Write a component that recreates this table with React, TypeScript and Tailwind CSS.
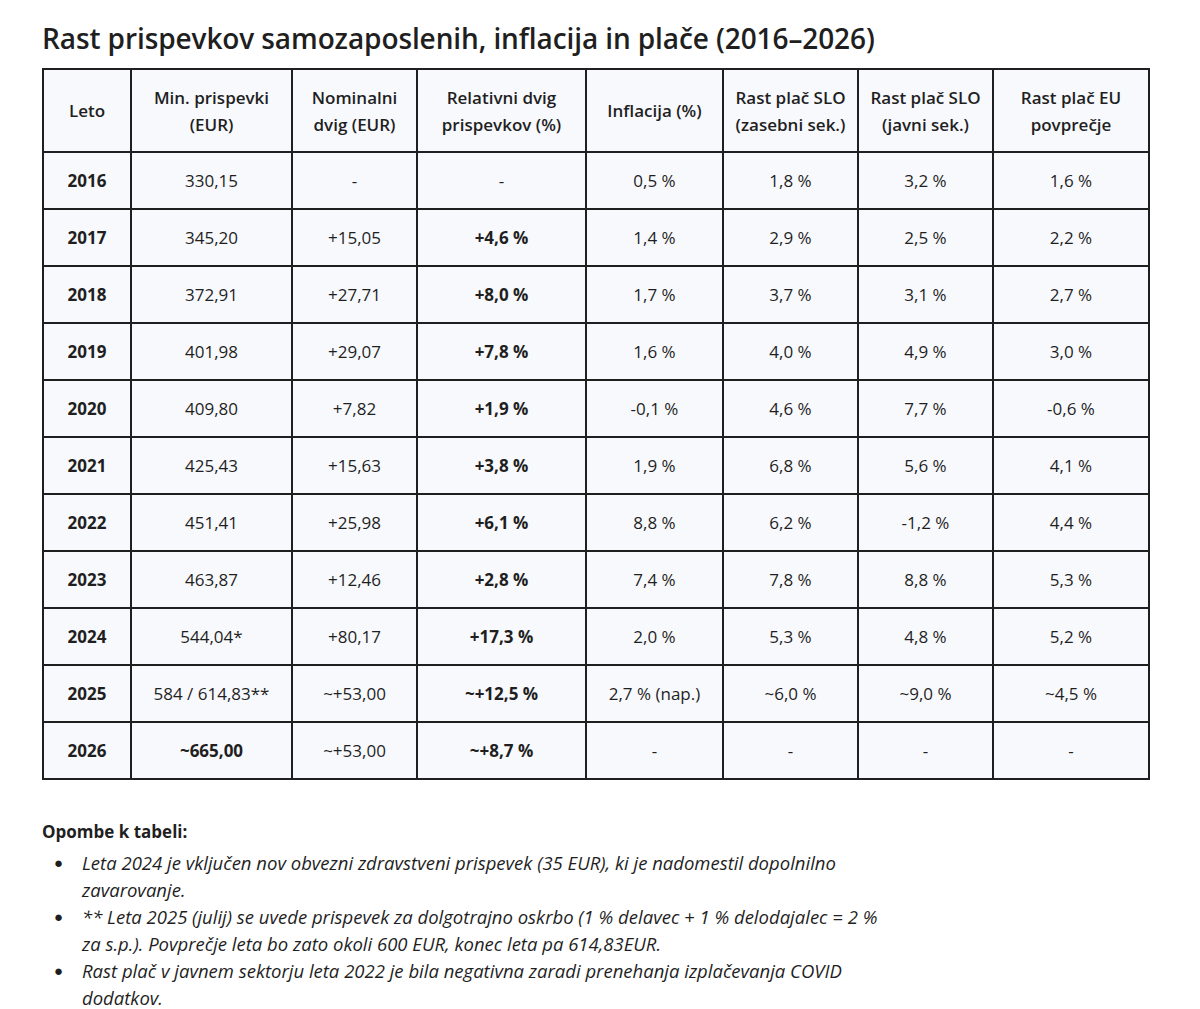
const headerLines: string[][] = [
  ["Leto"],
  ["Min. prispevki", "(EUR)"],
  ["Nominalni", "dvig (EUR)"],
  ["Relativni dvig", "prispevkov (%)"],
  ["Inflacija (%)"],
  ["Rast plač SLO", "(zasebni sek.)"],
  ["Rast plač SLO", "(javni sek.)"],
  ["Rast plač EU", "povprečje"],
];

const colWidths = [88, 161, 125, 169, 137, 135, 135, 156];

type Row = { year: string; min: string; minBold?: boolean; nom: string; rel: string; inf: string; zas: string; jav: string; eu: string };

const rows: Row[] = [
  { year: "2016", min: "330,15", nom: "-", rel: "-", inf: "0,5 %", zas: "1,8 %", jav: "3,2 %", eu: "1,6 %" },
  { year: "2017", min: "345,20", nom: "+15,05", rel: "+4,6 %", inf: "1,4 %", zas: "2,9 %", jav: "2,5 %", eu: "2,2 %" },
  { year: "2018", min: "372,91", nom: "+27,71", rel: "+8,0 %", inf: "1,7 %", zas: "3,7 %", jav: "3,1 %", eu: "2,7 %" },
  { year: "2019", min: "401,98", nom: "+29,07", rel: "+7,8 %", inf: "1,6 %", zas: "4,0 %", jav: "4,9 %", eu: "3,0 %" },
  { year: "2020", min: "409,80", nom: "+7,82", rel: "+1,9 %", inf: "-0,1 %", zas: "4,6 %", jav: "7,7 %", eu: "-0,6 %" },
  { year: "2021", min: "425,43", nom: "+15,63", rel: "+3,8 %", inf: "1,9 %", zas: "6,8 %", jav: "5,6 %", eu: "4,1 %" },
  { year: "2022", min: "451,41", nom: "+25,98", rel: "+6,1 %", inf: "8,8 %", zas: "6,2 %", jav: "-1,2 %", eu: "4,4 %" },
  { year: "2023", min: "463,87", nom: "+12,46", rel: "+2,8 %", inf: "7,4 %", zas: "7,8 %", jav: "8,8 %", eu: "5,3 %" },
  { year: "2024", min: "544,04*", nom: "+80,17", rel: "+17,3 %", inf: "2,0 %", zas: "5,3 %", jav: "4,8 %", eu: "5,2 %" },
  { year: "2025", min: "584 / 614,83**", nom: "~+53,00", rel: "~+12,5 %", inf: "2,7 % (nap.)", zas: "~6,0 %", jav: "~9,0 %", eu: "~4,5 %" },
  { year: "2026", min: "~665,00", minBold: true, nom: "~+53,00", rel: "~+8,7 %", inf: "-", zas: "-", jav: "-", eu: "-" },
];

const notes = [
  "Leta 2024 je vključen nov obvezni zdravstveni prispevek (35 EUR), ki je nadomestil dopolnilno zavarovanje.",
  "** Leta 2025 (julij) se uvede prispevek za dolgotrajno oskrbo (1 % delavec + 1 % delodajalec = 2 % za s.p.). Povprečje leta bo zato okoli 600 EUR, konec leta pa 614,83EUR.",
  "Rast plač v javnem sektorju leta 2022 je bila negativna zaradi prenehanja izplačevanja COVID dodatkov.",
];

const cell = "border-2 border-[#1f1f1f] bg-[#f8f9fd] text-center align-middle px-1";

export default function App() {
  return (
    <div className="min-h-[1009px] bg-white font-['Open_Sans',sans-serif] text-[#1f1f1f]">
      <div className="px-[42px] pt-[19px]">
        <h1 className="text-[28px] leading-[38px] font-semibold tracking-[-0.1px]">
          Rast prispevkov samozaposlenih, inflacija in plače (2016–2026)
        </h1>

        <table className="mt-[11px] w-[1106px] table-fixed border-collapse text-[17px]">
          <colgroup>
            {colWidths.map((w, i) => (
              <col key={i} style={{ width: w }} />
            ))}
          </colgroup>
          <thead>
            <tr className="h-[83px]">
              {headerLines.map((lines, i) => (
                <th key={i} className={`${cell} font-semibold leading-[27px]`}>
                  {lines.map((l, j) => (
                    <div key={j}>{l}</div>
                  ))}
                </th>
              ))}
            </tr>
          </thead>
          <tbody>
            {rows.map((r) => (
              <tr key={r.year} className="h-[57px]">
                <td className={`${cell} font-bold`}>{r.year}</td>
                <td className={`${cell} ${r.minBold ? "font-bold" : ""}`}>{r.min}</td>
                <td className={cell}>{r.nom}</td>
                <td className={`${cell} ${r.rel === "-" ? "" : "font-bold"}`}>{r.rel}</td>
                <td className={cell}>{r.inf}</td>
                <td className={cell}>{r.zas}</td>
                <td className={cell}>{r.jav}</td>
                <td className={cell}>{r.eu}</td>
              </tr>
            ))}
          </tbody>
        </table>

        <div className="mt-[40px]">
          <p className="text-[17px] font-bold leading-[24px]">Opombe k tabeli:</p>
          <ul className="mt-[5px] w-[850px] text-[18.5px] italic leading-[27px]">
            {notes.map((n, i) => (
              <li key={i} className="flex">
                <span className="w-[40px] shrink-0 pl-[12px] not-italic text-[15px]">●</span>
                <span>{n}</span>
              </li>
            ))}
          </ul>
        </div>
      </div>
    </div>
  );
}
